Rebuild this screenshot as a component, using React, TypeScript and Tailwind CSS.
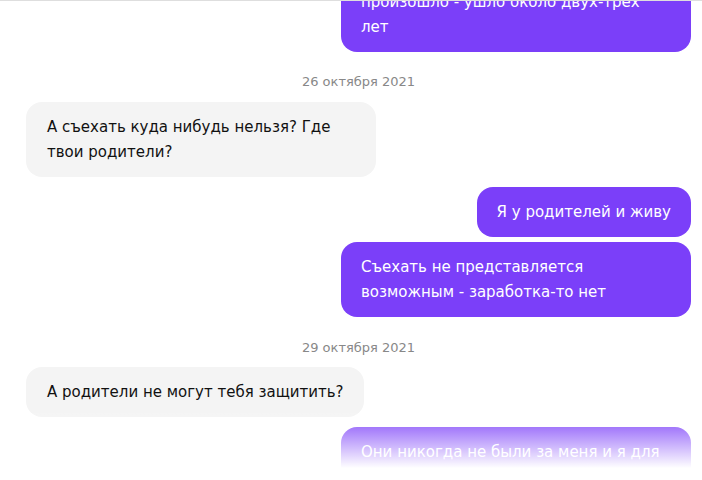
import React from "react";

const font = { fontFamily: '"DejaVu Sans", Verdana, sans-serif' };

function Out({ children, full }: { children: React.ReactNode; full?: boolean }) {
  return (
    <div className="flex justify-end">
      <div
        className={
          "rounded-[16px] bg-[#7b3ff9] px-5 py-[12.5px] text-[15px] leading-[25px] text-white " +
          (full ? "w-[350px]" : "")
        }
      >
        {children}
      </div>
    </div>
  );
}

function In({ children, full }: { children: React.ReactNode; full?: boolean }) {
  return (
    <div className="flex justify-start">
      <div
        className={
          "rounded-[16px] bg-[#f4f4f4] pl-[21px] pr-5 py-[12.5px] text-[15px] leading-[25px] text-[#111111] " +
          (full ? "w-[350px]" : "")
        }
      >
        {children}
      </div>
    </div>
  );
}

function DateLabel({ children, cls }: { children: React.ReactNode; cls: string }) {
  return (
    <div className={"text-center text-[13px] leading-[20px] text-[#888888] " + cls}>{children}</div>
  );
}

export default function App() {
  return (
    <div
      className="relative h-[480px] w-[702px] overflow-hidden border-t border-[#dedede] bg-white"
      style={font}
    >
      <div className="flex flex-col pl-[26px] pr-[11px]">
        <div className="mt-[-49px]">
          <Out full>
            чтобы понять, что со мной это
            <br />
            произошло - ушло около двух-трех
            <br />
            лет
          </Out>
        </div>
        <DateLabel cls="mt-[20px] mb-[10px]">26 октября 2021</DateLabel>
        <In full>
          А съехать куда нибудь нельзя? Где
          <br />
          твои родители?
        </In>
        <div className="mt-[10px]">
          <Out>Я у родителей и живу</Out>
        </div>
        <div className="mt-[5px]">
          <Out full>
            Съехать не представляется
            <br />
            возможным - заработка-то нет
          </Out>
        </div>
        <DateLabel cls="mt-[21px] mb-[9px]">29 октября 2021</DateLabel>
        <In>А родители не могут тебя защитить?</In>
        <div className="mt-[10px]">
          <Out full>
            Они никогда не были за меня и я для
            <br />
            них всегда была виноватой
          </Out>
        </div>
      </div>
      <div className="pointer-events-none absolute bottom-0 left-0 right-0 h-[70px] bg-linear-to-b from-white/0 to-white to-[83%]" />
    </div>
  );
}
